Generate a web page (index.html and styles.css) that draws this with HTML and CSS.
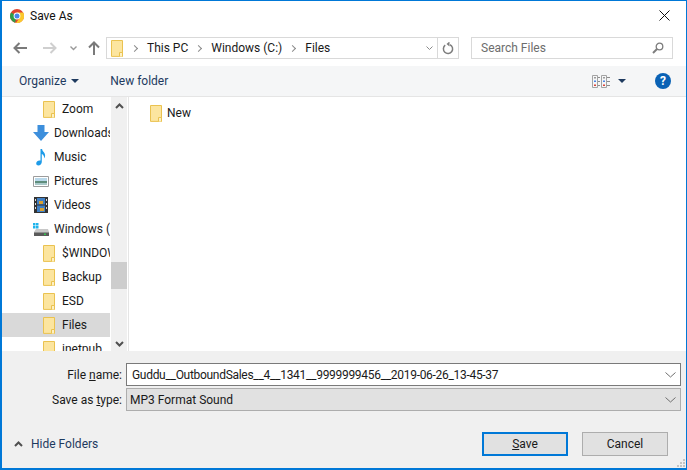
FILE: index.html
```html
<!DOCTYPE html>
<html>

<head>
    <meta charset="UTF-8">
    <title>Save As</title>
    <link rel="stylesheet" href="styles.css">
</head>

<body>

    <svg class="defs" width="0" height="0">
        <symbol id="folder" viewBox="0 0 13 17">
            <path d="M.5.5h11v15.9H.5z" fill="#fce59f" stroke="#eac250"/>
            <path d="M8.5 16.5v-4h3v4" fill="#fdf0c4" stroke="#eac250"/>
        </symbol>
    </svg>

    <div class="dialog">

        <div class="titlebar">
            <svg class="chrome" width="14" height="14" viewBox="0 0 14 14">
                <circle cx="7" cy="7" r="7" fill="#e0432f"/>
                <path d="M7 7 1 3.5A7 7 0 0 0 5 13.7z" fill="#2f9e48"/>
                <path d="M7 3.5h6.2A7 7 0 0 1 6 14l3.5-5z" fill="#fbc82e"/>
                <circle cx="7" cy="7" r="3.4" fill="#fff"/>
                <circle cx="7" cy="7" r="2.5" fill="#4a86e8"/>
            </svg>
            <span class="title">Save As</span>
            <svg class="close" width="11" height="11" viewBox="0 0 11 11">
                <path d="M.5.5l10 10M10.5.5l-10 10" stroke="#111" fill="none"/>
            </svg>
        </div>

        <div class="navbar">
            <svg class="nav-arrow" width="14" height="12" viewBox="0 0 14 12">
                <path d="M6.5 1 1.5 6l5 5M2 6h12" stroke="#7a7a7a" stroke-width="2" fill="none"/>
            </svg>
            <svg class="nav-arrow nav-next" width="14" height="12" viewBox="0 0 14 12">
                <path d="M7.5 1l5 5-5 5M12 6H0" stroke="#cfcfcf" stroke-width="2" fill="none"/>
            </svg>
            <svg class="nav-recent" width="7" height="5" viewBox="0 0 7 5">
                <path d="M.5.5 3.500 3.500 6.500.5" stroke="#9a9a9a" stroke-width="1.400" fill="none"/>
            </svg>
            <svg class="nav-up" width="12" height="14" viewBox="0 0 12 14">
                <path d="M1 6.500l5-5 5 5M6 2v12" stroke="#7a7a7a" stroke-width="2" fill="none"/>
            </svg>
            <div class="address">
                <svg class="address-folder" width="13" height="17"><use href="#folder"/></svg>
                <span class="crumb-sep"></span>
                <span class="crumb">This PC</span>
                <span class="crumb-sep"></span>
                <span class="crumb">Windows (C:)</span>
                <span class="crumb-sep"></span>
                <span class="crumb">Files</span>
                <svg class="address-drop" width="7" height="5" viewBox="0 0 7 5">
                    <path d="M.5.5 3.500 3.500 6.500.5" stroke="#8a8a8a" fill="none"/>
                </svg>
                <div class="refresh">
                    <svg width="12" height="13" viewBox="0 0 12 13">
                        <path d="M3.200 3.200A4.600 4.600 0 1 0 8 2.700" stroke="#7d7d7d" stroke-width="1.500" fill="none"/>
                        <path d="M4.500 0v5l-3-2.500z" fill="#7d7d7d" transform="translate(3 -.5)"/>
                    </svg>
                </div>
            </div>
            <div class="search">
                <span>Search Files</span>
                <svg width="12" height="12" viewBox="0 0 12 12">
                    <circle cx="7.500" cy="4.500" r="3.300" stroke="#7d7d7d" stroke-width="1.300" fill="none"/>
                    <path d="M5 7 1 11" stroke="#7d7d7d" stroke-width="2" fill="none"/>
                </svg>
            </div>
        </div>

        <div class="toolbar">
            <span class="tool">Organize</span>
            <span class="caret"></span>
            <span class="tool tool-new">New folder</span>
            <svg class="views" width="18" height="13" viewBox="0 0 18 13">
                <path d="M.5.500h5v12h-5zM9.500.500h5v12h-5z" fill="#f5f6f7" stroke="#a3a3a3"/>
                <path d="M6 2.500h2M6 6.500h2M6 10.500h2M15 2.500h3M15 6.500h3M15 10.500h3" stroke="#8c8c8c"/>
                <path d="M2 2h2v1.500H2zM11 2h2v1.500h-2z" fill="#9a9a9a"/>
                <path d="M2 5.500h2V7H2zM11 5.500h2V7h-2z" fill="#4a86e8"/>
                <path d="M2 9.500h2V11H2zM11 9.500h2V11h-2z" fill="#d9453a"/>
            </svg>
            <span class="caret caret-views"></span>
            <span class="help">?</span>
        </div>

        <div class="body">
            <div class="sidebar">
                <div class="tree">
                    <div class="row row-sub">
                        <svg width="13" height="17"><use href="#folder"/></svg><span>Zoom</span>
                    </div>
                    <div class="row">
                        <svg width="16" height="17" viewBox="0 0 16 17">
                            <path d="M4.500 0h7v7H16l-8 9-8-9h4.500z" fill="#3d8fdc"/>
                        </svg><span>Downloads</span>
                    </div>
                    <div class="row">
                        <svg width="16" height="17" viewBox="0 0 16 17">
                            <path d="M7.500 0h1.600c.3 2.800 3 3.200 3 6.500 0 1.200-.4 2-1 2.700.2-2.600-1-3.700-2.300-4.300V13c0 2-1.700 3.400-3.400 3.400-1.300 0-2.200-.8-2.200-2 0-1.700 1.800-3 3.200-3 .4 0 .8.100 1.100.200z" fill="#1e9be8"/>
                        </svg><span>Music</span>
                    </div>
                    <div class="row">
                        <svg width="16" height="13" viewBox="0 0 16 13">
                            <path d="M.5 1.500h15v10H.5z" fill="#fff" stroke="#9c9c9c"/>
                            <path d="M2 3h12v3H2z" fill="#b9d8ea"/>
                            <path d="M2 6h12v2H2z" fill="#5f8d7c"/>
                            <path d="M2 8h12v2H2z" fill="#a9c9c9"/>
                        </svg><span>Pictures</span>
                    </div>
                    <div class="row">
                        <svg width="16" height="16" viewBox="-1 0 16 16">
                            <path d="M0 0h14v16H0z" fill="#333"/>
                            <path d="M3 1h8v6.500H3z" fill="#3f7fc4"/>
                            <path d="M3 8.500h8V15H3z" fill="#3f7fc4"/>
                            <path d="M5 4h4v3H5zM6 11h4v3H6z" fill="#d9a02f"/>
                            <path d="M1 2h1v2H1zM1 6h1v2H1zM1 10h1v2H1zM12 2h1v2h-1zM12 6h1v2h-1zM12 10h1v2h-1z" fill="#ddd"/>
                        </svg><span>Videos</span>
                    </div>
                    <div class="row">
                        <svg width="16" height="14" viewBox="0 0 16 14">
                            <path d="M0 1h2.500v2.500H0zM3 1h2.500v2.500H3zM0 4h2.500v2.500H0zM3 4h2.500v2.500H3z" fill="#1fb4ec"/>
                            <path d="M3 7h12l1 3v4H1v-4z" fill="#c8c8c8"/>
                            <path d="M1 10.500h15V14H1z" fill="#5a5a5a"/>
                            <path d="M11 11.500h2v1.500h-2z" fill="#35c24f"/>
                        </svg><span>Windows (C:)</span>
                    </div>
                    <div class="row row-sub">
                        <svg width="13" height="17"><use href="#folder"/></svg><span>$WINDOWS.~BT</span>
                    </div>
                    <div class="row row-sub">
                        <svg width="13" height="17"><use href="#folder"/></svg><span>Backup</span>
                    </div>
                    <div class="row row-sub">
                        <svg width="13" height="17"><use href="#folder"/></svg><span>ESD</span>
                    </div>
                    <div class="row row-sub row-selected">
                        <svg width="13" height="17"><use href="#folder"/></svg><span>Files</span>
                    </div>
                    <div class="row row-sub">
                        <svg width="13" height="17"><use href="#folder"/></svg><span>inetpub</span>
                    </div>
                </div>
                <div class="scrollbar">
                    <svg width="9" height="6" viewBox="0 0 9 6">
                        <path d="M1 5l3.500-3.500L8 5" stroke="#505050" stroke-width="2" fill="none"/>
                    </svg>
                    <div class="track"><div class="thumb"></div></div>
                    <svg width="9" height="6" viewBox="0 0 9 6">
                        <path d="M1 1l3.500 3.500L8 1" stroke="#505050" stroke-width="2" fill="none"/>
                    </svg>
                </div>
            </div>
            <div class="pane">
                <div class="pane-item">
                    <svg width="13" height="17"><use href="#folder"/></svg><span>New</span>
                </div>
            </div>
        </div>

        <div class="footer">
            <div class="field">
                <label>File <u>n</u>ame:</label>
                <div class="combo combo-name">
                    <span class="file-name">Guddu__OutboundSales__4__1341__9999999456__2019-06-26_13-45-37</span>
                    <svg width="11" height="6" viewBox="0 0 11 6">
                        <path d="M.5.500l5 4.500 5-4.500" stroke="#6f6f6f" fill="none"/>
                    </svg>
                </div>
            </div>
            <div class="field">
                <label>Save as <u>t</u>ype:</label>
                <div class="combo combo-type">
                    <span>MP3 Format Sound</span>
                    <svg width="11" height="6" viewBox="0 0 11 6">
                        <path d="M.5.500l5 4.500 5-4.500" stroke="#6f6f6f" fill="none"/>
                    </svg>
                </div>
            </div>
            <div class="actions">
                <div class="hide-folders">
                    <svg width="9" height="6" viewBox="0 0 9 6">
                        <path d="M1 5l3.500-3.500L8 5" stroke="#505050" stroke-width="2" fill="none"/>
                    </svg>
                    <span>Hide Folders</span>
                </div>
                <button class="btn btn-default"><u>S</u>ave</button>
                <button class="btn">Cancel</button>
            </div>
            <svg class="grip" width="9" height="9" viewBox="0 0 9 9">
                <path d="M6 0h2v2H6zM3 3h2v2H3zM6 3h2v2H6zM0 6h2v2H0zM3 6h2v2H3zM6 6h2v2H6z" fill="#c4c4c4"/>
            </svg>
        </div>

    </div>

</body>
</html>
```

FILE: styles.css
```css
*{
    margin: 0px;
    padding: 0px;
    box-sizing: border-box;
    font-family: Roboto, sans-serif;
}
body{
    width: 687px;
    height: 470px;
    overflow: hidden;
    background: #fff;
}
.defs{
    position: absolute;
}
svg{
    display: block;
    flex-shrink: 0;
}
.dialog{
    width: 687px;
    height: 470px;
    border: 1px solid #0078d7;
    border-width: 1px 1px 2px 2px;
    display: flex;
    flex-direction: column;
    font-size: 12px;
    color: #1a1a1a;
}

/* title bar */
.titlebar{
    height: 29px;
    display: flex;
    align-items: center;
    padding: 0px 0px 0px 8px;
}
.title{
    margin-left: 6px;
    color: #111;
}
.close{
    margin-left: auto;
    margin-right: 16px;
}

/* back, forward, address and search */
.navbar{
    height: 36px;
    display: flex;
    align-items: center;
}
.nav-arrow{
    margin-left: 11px;
}
.nav-next{
    margin-left: 16px;
}
.nav-recent{
    margin-left: 13px;
}
.nav-up{
    margin-left: 11px;
}
.address{
    width: 353px;
    height: 22px;
    margin-left: 6px;
    border: 1px solid #d9d9d9;
    display: flex;
    align-items: center;
    padding-left: 4px;
}
.crumb{
    color: #1a1a1a;
}
.crumb-sep{
    width: 5px;
    height: 5px;
    margin: 0px 10px 0px 8px;
    border-top: 1.5px solid #8a8a8a;
    border-right: 1.5px solid #8a8a8a;
    transform: rotate(45deg);
}
.address-drop{
    margin-left: auto;
    margin-right: 4px;
}
.refresh{
    width: 21px;
    height: 20px;
    border-left: 1px solid #d9d9d9;
    display: flex;
    align-items: center;
    justify-content: center;
}
.search{
    width: 202px;
    height: 22px;
    margin-left: 12px;
    border: 1px solid #d9d9d9;
    display: flex;
    align-items: center;
    justify-content: space-between;
    padding: 0px 8px 0px 9px;
    color: #6d6d6d;
}

/* toolbar */
.toolbar{
    height: 31px;
    background: #f5f6f7;
    border-bottom: 1px solid #e5e5e5;
    display: flex;
    align-items: center;
    color: #1e3a5f;
}
.tool{
    margin-left: 17px;
}
.tool-new{
    margin-left: 31px;
}
.caret{
    width: 0px;
    height: 0px;
    margin-left: 5px;
    border-left: 4px solid transparent;
    border-right: 4px solid transparent;
    border-top: 4px solid #1e3a5f;
}
.views{
    margin-left: auto;
}
.caret-views{
    margin-left: 8px;
    margin-right: 29px;
}
.help{
    width: 16px;
    height: 16px;
    margin-right: 15px;
    border-radius: 50%;
    background: #0a62b5;
    color: #fff;
    font-weight: bold;
    font-size: 12px;
    line-height: 16px;
    text-align: center;
}

/* folder tree and file list */
.body{
    height: 254px;
    display: flex;
}
.sidebar{
    width: 127px;
    display: flex;
    border-right: 1px solid #e5e5e5;
    overflow: hidden;
}
.tree{
    width: 108px;
    overflow: hidden;
}
.row{
    height: 24px;
    display: flex;
    align-items: center;
    padding-left: 31px;
    white-space: nowrap;
}
.row svg{
    margin-right: 5px;
}
.row-sub{
    padding-left: 41px;
}
.row-sub svg{
    margin-right: 6px;
}
.row-selected{
    background: #d9d9d9;
}
.scrollbar{
    width: 16px;
    margin-left: 1px;
    background: #f0f0f0;
    display: flex;
    flex-direction: column;
    align-items: center;
    padding: 6px 0px 4px 0px;
}
.track{
    flex: 1;
    width: 100%;
    display: flex;
    padding-top: 153px;
    padding-bottom: 52px;
}
.thumb{
    flex: 1;
    background: #cdcdcd;
}
.pane{
    flex: 1;
    padding: 7px 0px 0px 21px;
}
.pane-item{
    display: flex;
    align-items: center;
    height: 18px;
}
.pane-item svg{
    margin-right: 4px;
}

/* file name, type and buttons */
.footer{
    flex: 1;
    background: #f0f0f0;
    padding-top: 12px;
    position: relative;
}
.field{
    display: flex;
    align-items: center;
    margin-bottom: 2px;
    padding-right: 5px;
}
.field label{
    width: 124px;
    text-align: right;
    padding-right: 4px;
}
.combo{
    flex: 1;
    height: 23px;
    display: flex;
    align-items: center;
    justify-content: space-between;
    padding-right: 4px;
}
.combo-name{
    background: #fff;
    border: 1px solid #7a7a7a;
    padding-left: 5px;
}
.file-name{
    letter-spacing: -0.3px;
}
.combo-type{
    background: #e1e1e1;
    border: 1px solid #adadad;
    padding-left: 3px;
}
.actions{
    display: flex;
    align-items: center;
    margin-top: 21px;
    padding-right: 18px;
}
.hide-folders{
    display: flex;
    align-items: center;
    margin-right: auto;
    padding-left: 12px;
    color: #1e3a5f;
}
.hide-folders svg{
    margin-right: 8px;
}
.btn{
    width: 86px;
    height: 24px;
    margin-left: 14px;
    background: #e1e1e1;
    border: 1px solid #adadad;
    font-size: 12px;
    color: #1a1a1a;
}
.btn-default{
    border: 2px solid #0078d7;
}
.grip{
    position: absolute;
    right: 0px;
    bottom: 0px;
}
```
